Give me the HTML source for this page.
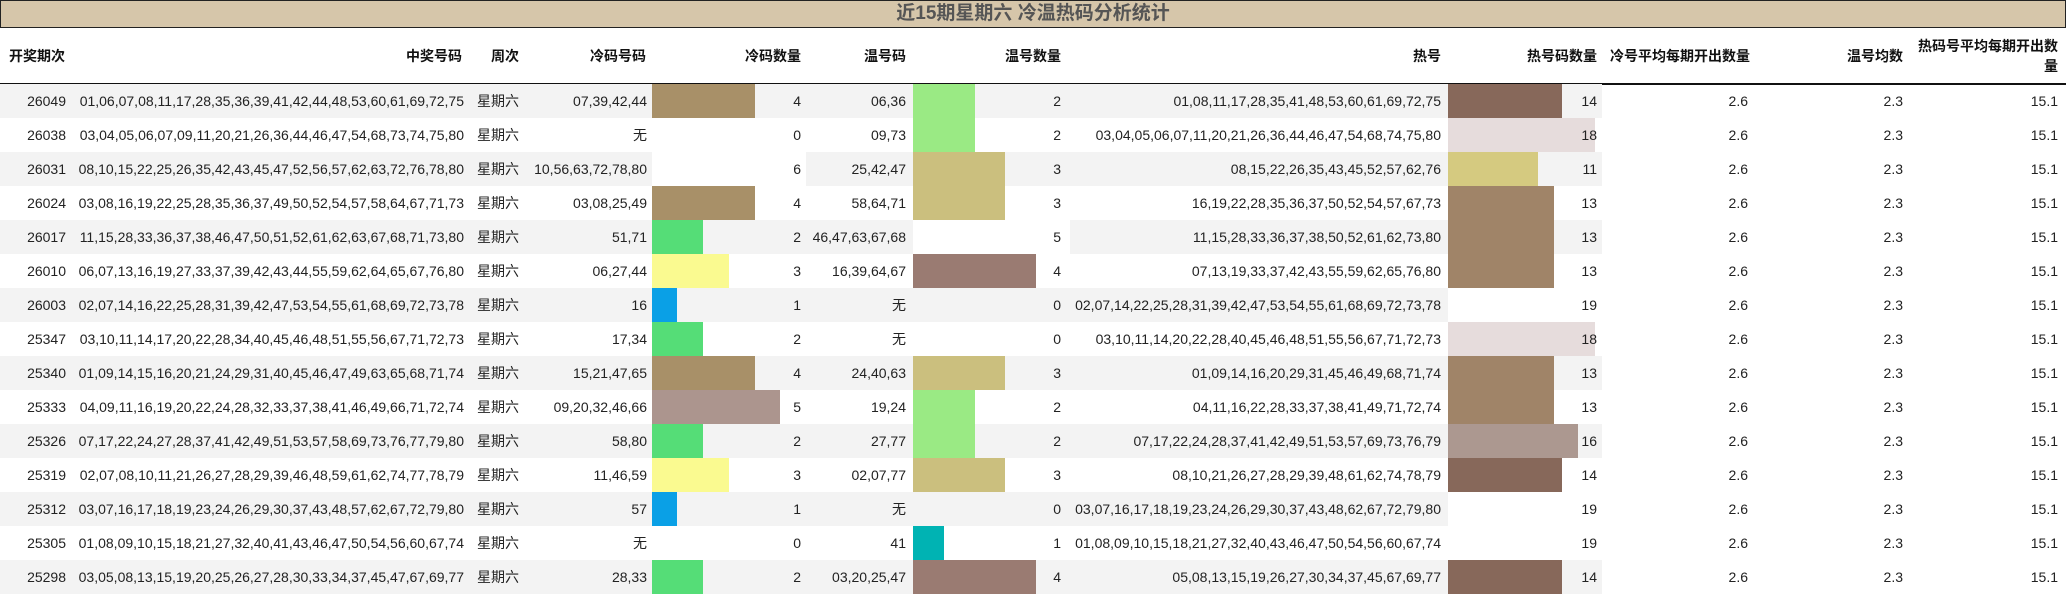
<!DOCTYPE html>
<html><head><meta charset="utf-8">
<style>
html,body{margin:0;padding:0;background:#fff;width:2066px;height:596px;overflow:hidden}
body{font-family:"Liberation Sans","Noto Sans CJK SC",sans-serif;font-size:14px;color:#222}
.title{position:absolute;left:0;top:0;width:2064px;height:26px;border:1px solid #222;background:#d6c6aa;color:#555;font-weight:bold;font-size:19px;line-height:26px;text-align:center}
table{position:absolute;left:0;top:28px;border-collapse:collapse;table-layout:fixed;width:2066px}
th{height:55px;font-weight:bold;text-align:right;vertical-align:middle;border-bottom:2px solid #111;padding:0;font-size:14px;color:#111}
td{height:34px;padding:0;text-align:right;vertical-align:middle;white-space:nowrap;position:relative}
tr.g td.s{background:#f3f3f3}
.b{position:absolute;left:0;top:0;height:34px}
.v{position:relative}
</style></head><body>
<div class="title">近15期星期六 冷温热码分析统计</div>
<table>
<colgroup><col style="width:70px"><col style="width:398px"><col style="width:59px"><col style="width:125px"><col style="width:154px"><col style="width:107px"><col style="width:157px"><col style="width:378px"><col style="width:154px"><col style="width:148px"><col style="width:157px"><col style="width:159px"></colgroup>
<tr><th style="text-align:left;padding-left:9px">开奖期次</th><th style="padding-right:6px">中奖号码</th><th style="padding-right:8px">周次</th><th style="padding-right:6px">冷码号码</th><th style="padding-right:5px">冷码数量</th><th style="padding-right:7px">温号码</th><th style="padding-right:9px">温号数量</th><th style="padding-right:7px">热号</th><th style="padding-right:5px">热号码数量</th><th style="text-align:left;padding-left:8px">冷号平均每期开出数量</th><th style="padding-right:4px">温号均数</th><th style="padding-right:8px;white-space:normal;line-height:20px">热码号平均每期开出数量</th></tr>
</table>
<div id="rows"></div>
<table style="top:84px" id="body">
<colgroup><col style="width:70px"><col style="width:398px"><col style="width:59px"><col style="width:125px"><col style="width:154px"><col style="width:107px"><col style="width:157px"><col style="width:378px"><col style="width:154px"><col style="width:148px"><col style="width:157px"><col style="width:159px"></colgroup>
<tr class="g"><td class="s" style="padding-right:4px">26049</td><td class="s" style="padding-right:4px">01,06,07,08,11,17,28,35,36,39,41,42,44,48,53,60,61,69,72,75</td><td class="s" style="text-align:left;padding-left:9px">星期六</td><td class="s" style="padding-right:5px">07,39,42,44</td><td class="s" style="padding-right:5px"><div class="b" style="width:103px;background:#a89068"></div><span class="v">4</span></td><td class="s" style="padding-right:7px">06,36</td><td class="s" style="padding-right:9px"><div class="b" style="width:62px;background:#9aea84"></div><span class="v">2</span></td><td class="s" style="padding-right:7px">01,08,11,17,28,35,41,48,53,60,61,69,72,75</td><td class="s" style="padding-right:5px"><div class="b" style="width:114px;background:#87685a"></div><span class="v">14</span></td><td style="padding-right:2px">2.6</td><td style="padding-right:4px">2.3</td><td style="padding-right:8px">15.1</td></tr>
<tr><td class="s" style="padding-right:4px">26038</td><td class="s" style="padding-right:4px">03,04,05,06,07,09,11,20,21,26,36,44,46,47,54,68,73,74,75,80</td><td class="s" style="text-align:left;padding-left:9px">星期六</td><td class="s" style="padding-right:5px">无</td><td class="s" style="padding-right:5px"><span class="v">0</span></td><td class="s" style="padding-right:7px">09,73</td><td class="s" style="padding-right:9px"><div class="b" style="width:62px;background:#9aea84"></div><span class="v">2</span></td><td class="s" style="padding-right:7px">03,04,05,06,07,11,20,21,26,36,44,46,47,54,68,74,75,80</td><td class="s" style="padding-right:5px"><div class="b" style="width:147px;background:#e6dcdc"></div><span class="v">18</span></td><td style="padding-right:2px">2.6</td><td style="padding-right:4px">2.3</td><td style="padding-right:8px">15.1</td></tr>
<tr class="g"><td class="s" style="padding-right:4px">26031</td><td class="s" style="padding-right:4px">08,10,15,22,25,26,35,42,43,45,47,52,56,57,62,63,72,76,78,80</td><td class="s" style="text-align:left;padding-left:9px">星期六</td><td class="s" style="padding-right:5px">10,56,63,72,78,80</td><td style="padding-right:5px;background:#fff"><span class="v">6</span></td><td class="s" style="padding-right:7px">25,42,47</td><td class="s" style="padding-right:9px"><div class="b" style="width:92px;background:#cbbf7e"></div><span class="v">3</span></td><td class="s" style="padding-right:7px">08,15,22,26,35,43,45,52,57,62,76</td><td class="s" style="padding-right:5px"><div class="b" style="width:90px;background:#d5ca80"></div><span class="v">11</span></td><td style="padding-right:2px">2.6</td><td style="padding-right:4px">2.3</td><td style="padding-right:8px">15.1</td></tr>
<tr><td class="s" style="padding-right:4px">26024</td><td class="s" style="padding-right:4px">03,08,16,19,22,25,28,35,36,37,49,50,52,54,57,58,64,67,71,73</td><td class="s" style="text-align:left;padding-left:9px">星期六</td><td class="s" style="padding-right:5px">03,08,25,49</td><td class="s" style="padding-right:5px"><div class="b" style="width:103px;background:#a89068"></div><span class="v">4</span></td><td class="s" style="padding-right:7px">58,64,71</td><td class="s" style="padding-right:9px"><div class="b" style="width:92px;background:#cbbf7e"></div><span class="v">3</span></td><td class="s" style="padding-right:7px">16,19,22,28,35,36,37,50,52,54,57,67,73</td><td class="s" style="padding-right:5px"><div class="b" style="width:106px;background:#a08468"></div><span class="v">13</span></td><td style="padding-right:2px">2.6</td><td style="padding-right:4px">2.3</td><td style="padding-right:8px">15.1</td></tr>
<tr class="g"><td class="s" style="padding-right:4px">26017</td><td class="s" style="padding-right:4px">11,15,28,33,36,37,38,46,47,50,51,52,61,62,63,67,68,71,73,80</td><td class="s" style="text-align:left;padding-left:9px">星期六</td><td class="s" style="padding-right:5px">51,71</td><td class="s" style="padding-right:5px"><div class="b" style="width:51px;background:#55dd77"></div><span class="v">2</span></td><td class="s" style="padding-right:7px">46,47,63,67,68</td><td style="padding-right:9px;background:#fff"><span class="v">5</span></td><td class="s" style="padding-right:7px">11,15,28,33,36,37,38,50,52,61,62,73,80</td><td class="s" style="padding-right:5px"><div class="b" style="width:106px;background:#a08468"></div><span class="v">13</span></td><td style="padding-right:2px">2.6</td><td style="padding-right:4px">2.3</td><td style="padding-right:8px">15.1</td></tr>
<tr><td class="s" style="padding-right:4px">26010</td><td class="s" style="padding-right:4px">06,07,13,16,19,27,33,37,39,42,43,44,55,59,62,64,65,67,76,80</td><td class="s" style="text-align:left;padding-left:9px">星期六</td><td class="s" style="padding-right:5px">06,27,44</td><td class="s" style="padding-right:5px"><div class="b" style="width:77px;background:#fafa90"></div><span class="v">3</span></td><td class="s" style="padding-right:7px">16,39,64,67</td><td class="s" style="padding-right:9px"><div class="b" style="width:123px;background:#9a7b72"></div><span class="v">4</span></td><td class="s" style="padding-right:7px">07,13,19,33,37,42,43,55,59,62,65,76,80</td><td class="s" style="padding-right:5px"><div class="b" style="width:106px;background:#a08468"></div><span class="v">13</span></td><td style="padding-right:2px">2.6</td><td style="padding-right:4px">2.3</td><td style="padding-right:8px">15.1</td></tr>
<tr class="g"><td class="s" style="padding-right:4px">26003</td><td class="s" style="padding-right:4px">02,07,14,16,22,25,28,31,39,42,47,53,54,55,61,68,69,72,73,78</td><td class="s" style="text-align:left;padding-left:9px">星期六</td><td class="s" style="padding-right:5px">16</td><td class="s" style="padding-right:5px"><div class="b" style="width:25px;background:#0aa0e6"></div><span class="v">1</span></td><td class="s" style="padding-right:7px">无</td><td class="s" style="padding-right:9px"><span class="v">0</span></td><td class="s" style="padding-right:7px">02,07,14,22,25,28,31,39,42,47,53,54,55,61,68,69,72,73,78</td><td style="padding-right:5px;background:#fff"><span class="v">19</span></td><td style="padding-right:2px">2.6</td><td style="padding-right:4px">2.3</td><td style="padding-right:8px">15.1</td></tr>
<tr><td class="s" style="padding-right:4px">25347</td><td class="s" style="padding-right:4px">03,10,11,14,17,20,22,28,34,40,45,46,48,51,55,56,67,71,72,73</td><td class="s" style="text-align:left;padding-left:9px">星期六</td><td class="s" style="padding-right:5px">17,34</td><td class="s" style="padding-right:5px"><div class="b" style="width:51px;background:#55dd77"></div><span class="v">2</span></td><td class="s" style="padding-right:7px">无</td><td class="s" style="padding-right:9px"><span class="v">0</span></td><td class="s" style="padding-right:7px">03,10,11,14,20,22,28,40,45,46,48,51,55,56,67,71,72,73</td><td class="s" style="padding-right:5px"><div class="b" style="width:147px;background:#e6dcdc"></div><span class="v">18</span></td><td style="padding-right:2px">2.6</td><td style="padding-right:4px">2.3</td><td style="padding-right:8px">15.1</td></tr>
<tr class="g"><td class="s" style="padding-right:4px">25340</td><td class="s" style="padding-right:4px">01,09,14,15,16,20,21,24,29,31,40,45,46,47,49,63,65,68,71,74</td><td class="s" style="text-align:left;padding-left:9px">星期六</td><td class="s" style="padding-right:5px">15,21,47,65</td><td class="s" style="padding-right:5px"><div class="b" style="width:103px;background:#a89068"></div><span class="v">4</span></td><td class="s" style="padding-right:7px">24,40,63</td><td class="s" style="padding-right:9px"><div class="b" style="width:92px;background:#cbbf7e"></div><span class="v">3</span></td><td class="s" style="padding-right:7px">01,09,14,16,20,29,31,45,46,49,68,71,74</td><td class="s" style="padding-right:5px"><div class="b" style="width:106px;background:#a08468"></div><span class="v">13</span></td><td style="padding-right:2px">2.6</td><td style="padding-right:4px">2.3</td><td style="padding-right:8px">15.1</td></tr>
<tr><td class="s" style="padding-right:4px">25333</td><td class="s" style="padding-right:4px">04,09,11,16,19,20,22,24,28,32,33,37,38,41,46,49,66,71,72,74</td><td class="s" style="text-align:left;padding-left:9px">星期六</td><td class="s" style="padding-right:5px">09,20,32,46,66</td><td class="s" style="padding-right:5px"><div class="b" style="width:128px;background:#ac958e"></div><span class="v">5</span></td><td class="s" style="padding-right:7px">19,24</td><td class="s" style="padding-right:9px"><div class="b" style="width:62px;background:#9aea84"></div><span class="v">2</span></td><td class="s" style="padding-right:7px">04,11,16,22,28,33,37,38,41,49,71,72,74</td><td class="s" style="padding-right:5px"><div class="b" style="width:106px;background:#a08468"></div><span class="v">13</span></td><td style="padding-right:2px">2.6</td><td style="padding-right:4px">2.3</td><td style="padding-right:8px">15.1</td></tr>
<tr class="g"><td class="s" style="padding-right:4px">25326</td><td class="s" style="padding-right:4px">07,17,22,24,27,28,37,41,42,49,51,53,57,58,69,73,76,77,79,80</td><td class="s" style="text-align:left;padding-left:9px">星期六</td><td class="s" style="padding-right:5px">58,80</td><td class="s" style="padding-right:5px"><div class="b" style="width:51px;background:#55dd77"></div><span class="v">2</span></td><td class="s" style="padding-right:7px">27,77</td><td class="s" style="padding-right:9px"><div class="b" style="width:62px;background:#9aea84"></div><span class="v">2</span></td><td class="s" style="padding-right:7px">07,17,22,24,28,37,41,42,49,51,53,57,69,73,76,79</td><td class="s" style="padding-right:5px"><div class="b" style="width:130px;background:#ac9890"></div><span class="v">16</span></td><td style="padding-right:2px">2.6</td><td style="padding-right:4px">2.3</td><td style="padding-right:8px">15.1</td></tr>
<tr><td class="s" style="padding-right:4px">25319</td><td class="s" style="padding-right:4px">02,07,08,10,11,21,26,27,28,29,39,46,48,59,61,62,74,77,78,79</td><td class="s" style="text-align:left;padding-left:9px">星期六</td><td class="s" style="padding-right:5px">11,46,59</td><td class="s" style="padding-right:5px"><div class="b" style="width:77px;background:#fafa90"></div><span class="v">3</span></td><td class="s" style="padding-right:7px">02,07,77</td><td class="s" style="padding-right:9px"><div class="b" style="width:92px;background:#cbbf7e"></div><span class="v">3</span></td><td class="s" style="padding-right:7px">08,10,21,26,27,28,29,39,48,61,62,74,78,79</td><td class="s" style="padding-right:5px"><div class="b" style="width:114px;background:#87685a"></div><span class="v">14</span></td><td style="padding-right:2px">2.6</td><td style="padding-right:4px">2.3</td><td style="padding-right:8px">15.1</td></tr>
<tr class="g"><td class="s" style="padding-right:4px">25312</td><td class="s" style="padding-right:4px">03,07,16,17,18,19,23,24,26,29,30,37,43,48,57,62,67,72,79,80</td><td class="s" style="text-align:left;padding-left:9px">星期六</td><td class="s" style="padding-right:5px">57</td><td class="s" style="padding-right:5px"><div class="b" style="width:25px;background:#0aa0e6"></div><span class="v">1</span></td><td class="s" style="padding-right:7px">无</td><td class="s" style="padding-right:9px"><span class="v">0</span></td><td class="s" style="padding-right:7px">03,07,16,17,18,19,23,24,26,29,30,37,43,48,62,67,72,79,80</td><td style="padding-right:5px;background:#fff"><span class="v">19</span></td><td style="padding-right:2px">2.6</td><td style="padding-right:4px">2.3</td><td style="padding-right:8px">15.1</td></tr>
<tr><td class="s" style="padding-right:4px">25305</td><td class="s" style="padding-right:4px">01,08,09,10,15,18,21,27,32,40,41,43,46,47,50,54,56,60,67,74</td><td class="s" style="text-align:left;padding-left:9px">星期六</td><td class="s" style="padding-right:5px">无</td><td class="s" style="padding-right:5px"><span class="v">0</span></td><td class="s" style="padding-right:7px">41</td><td class="s" style="padding-right:9px"><div class="b" style="width:31px;background:#00b3b3"></div><span class="v">1</span></td><td class="s" style="padding-right:7px">01,08,09,10,15,18,21,27,32,40,43,46,47,50,54,56,60,67,74</td><td style="padding-right:5px;background:#fff"><span class="v">19</span></td><td style="padding-right:2px">2.6</td><td style="padding-right:4px">2.3</td><td style="padding-right:8px">15.1</td></tr>
<tr class="g"><td class="s" style="padding-right:4px">25298</td><td class="s" style="padding-right:4px">03,05,08,13,15,19,20,25,26,27,28,30,33,34,37,45,47,67,69,77</td><td class="s" style="text-align:left;padding-left:9px">星期六</td><td class="s" style="padding-right:5px">28,33</td><td class="s" style="padding-right:5px"><div class="b" style="width:51px;background:#55dd77"></div><span class="v">2</span></td><td class="s" style="padding-right:7px">03,20,25,47</td><td class="s" style="padding-right:9px"><div class="b" style="width:123px;background:#9a7b72"></div><span class="v">4</span></td><td class="s" style="padding-right:7px">05,08,13,15,19,26,27,30,34,37,45,67,69,77</td><td class="s" style="padding-right:5px"><div class="b" style="width:114px;background:#87685a"></div><span class="v">14</span></td><td style="padding-right:2px">2.6</td><td style="padding-right:4px">2.3</td><td style="padding-right:8px">15.1</td></tr>
</table>
</body></html>
